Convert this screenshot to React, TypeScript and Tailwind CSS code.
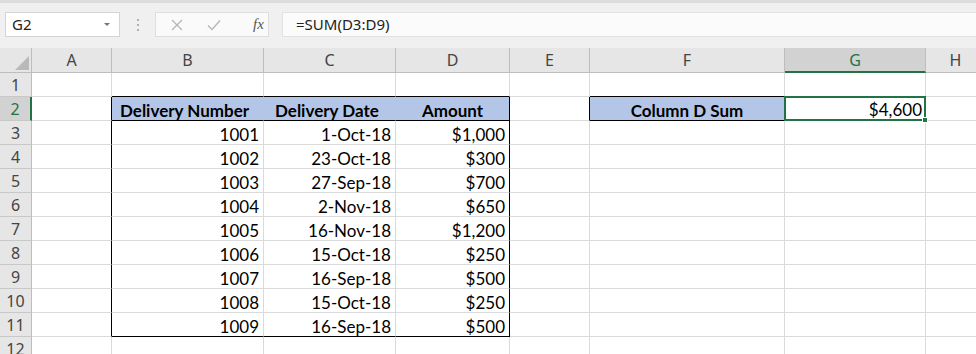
import React from "react";

const cols = ["A", "B", "C", "D", "E", "F", "G", "H"];

const rows = [
  ["1001", "1-Oct-18", "$1,000"],
  ["1002", "23-Oct-18", "$300"],
  ["1003", "27-Sep-18", "$700"],
  ["1004", "2-Nov-18", "$650"],
  ["1005", "16-Nov-18", "$1,200"],
  ["1006", "15-Oct-18", "$250"],
  ["1007", "16-Sep-18", "$500"],
  ["1008", "15-Oct-18", "$250"],
  ["1009", "16-Sep-18", "$500"],
];

const cellFont = { fontFamily: "Lato, 'Open Sans', sans-serif" };

function Cell({
  children,
  className = "",
}: {
  children?: React.ReactNode;
  className?: string;
}) {
  return (
    <div
      className={`h-[24px] border-r border-b border-[#dadada] flex items-end pb-[1px] px-[4px] text-[17px] text-black leading-none overflow-hidden whitespace-nowrap ${className}`}
      style={cellFont}
    >
      {children}
    </div>
  );
}

function RowHeader({ n, selected = false }: { n: number; selected?: boolean }) {
  return (
    <div
      className={`h-[24px] border-b border-[#c8c8c8] flex items-center justify-center text-[16px] ${
        selected
          ? "bg-[#d2d2d2] text-[#217346] border-r-2 border-r-[#217346]"
          : "bg-[#e6e6e6] text-[#444] border-r border-r-[#bdbdbd]"
      }`}
    >
      {n}
    </div>
  );
}

export default function App() {
  return (
    <div
      className="w-[976px] h-[354px] overflow-hidden bg-white"
      style={{ fontFamily: "'Noto Sans', 'Open Sans', sans-serif" }}
    >
      {/* formula bar */}
      <div className="h-[48px] bg-[#f0f0f0] border-t-[3px] border-[#dcdcdc] flex items-start pt-[9px] pl-[5px]">
        <div className="w-[115px] h-[25px] bg-white border border-[#d4d4d4] flex items-center justify-between pl-[6px] pr-[8px]">
          <span className="text-[15px] text-[#222]">G2</span>
          <svg width="8" height="5" viewBox="0 0 8 5">
            <path d="M1 1 L4 4 L7 1 Z" fill="#777" />
          </svg>
        </div>
        <div className="w-[35px] h-[25px] flex flex-col items-center justify-center gap-[3px]">
          <span className="w-[2px] h-[2px] bg-[#b0b0b0]" />
          <span className="w-[2px] h-[2px] bg-[#b0b0b0]" />
          <span className="w-[2px] h-[2px] bg-[#b0b0b0]" />
        </div>
        <div className="w-[114px] h-[25px] bg-[#fafafa] border border-[#dedede] flex items-center pl-[14px] gap-[22px]">
          <svg width="14" height="14" viewBox="0 0 14 14">
            <path d="M2 2 L12 12 M12 2 L2 12" stroke="#b5b5b5" strokeWidth="1.3" />
          </svg>
          <svg width="16" height="14" viewBox="0 0 16 14">
            <path d="M2 7.5 L6 11.5 L14 2.5" stroke="#b5b5b5" strokeWidth="1.3" fill="none" />
          </svg>
          <span
            className="text-[15px] italic text-[#555] ml-[9px]"
            style={{ fontFamily: "'Liberation Serif', serif" }}
          >
            <i>f</i>x
          </span>
        </div>
        <div className="ml-[13px] flex-1 h-[25px] bg-[#fbfbfb] border-y border-l border-[#e2e2e2] flex items-center pl-[13px] text-[15px] text-[#222]">
          =SUM(D3:D9)
        </div>
      </div>

      {/* grid */}
      <div className="grid grid-cols-[32px_80px_152px_132px_114px_80px_195px_141px_60px]">
        {/* column headers */}
        <div className="h-[25px] bg-[#e6e6e6] border-r border-b border-[#bdbdbd] flex items-end justify-end pr-[2px] pb-[2px]">
          <svg width="14" height="14" viewBox="0 0 14 14">
            <path d="M14 0 L14 14 L0 14 Z" fill="#b9b9b9" />
          </svg>
        </div>
        {cols.map((c) =>
          c === "G" ? (
            <div
              key={c}
              className="h-[25px] bg-[#d2d2d2] border-r border-[#bdbdbd] border-b-2 border-b-[#217346] flex items-center justify-center text-[16px] text-[#217346]"
            >
              {c}
            </div>
          ) : (
            <div
              key={c}
              className="h-[25px] bg-[#e6e6e6] border-r border-b border-[#bdbdbd] flex items-center justify-center text-[16px] text-[#444]"
            >
              {c}
            </div>
          )
        )}

        {/* row 1 */}
        <RowHeader n={1} />
        <Cell />
        <Cell className="border-b-black" />
        <Cell className="border-b-black" />
        <Cell className="border-b-black" />
        <Cell />
        <Cell className="border-b-black" />
        <Cell />
        <Cell />

        {/* row 2 */}
        <RowHeader n={2} selected />
        <Cell className="border-r-black" />
        <Cell className="bg-[#b4c6e7] border-r-[#b4c6e7] border-b-black font-bold pl-[8px]">Delivery Number</Cell>
        <Cell className="bg-[#b4c6e7] border-r-[#b4c6e7] border-b-black font-bold pl-[11px]">Delivery Date</Cell>
        <Cell className="bg-[#b4c6e7] border-r-black border-b-black font-bold justify-center">Amount</Cell>
        <Cell className="border-r-black" />
        <Cell className="bg-[#b4c6e7] border-r-[#217346] border-b-black font-bold justify-center">Column D Sum</Cell>
        <div className="relative border-2 border-[#217346] -ml-[1px] -mt-[1px] h-[25px] w-[142px] flex items-end justify-end pr-[2px] pb-[1px] text-[17px] leading-none" style={cellFont}>
          $4,600
          <span className="absolute -right-[4px] -bottom-[4px] w-[6px] h-[6px] bg-[#217346] border border-white" />
        </div>
        <Cell />

        {/* data rows */}
        {rows.map((r, i) => {
          const last = i === rows.length - 1;
          const b = last ? "border-b-black" : "";
          return (
            <React.Fragment key={i}>
              <RowHeader n={i + 3} />
              <Cell className="border-r-black" />
              <Cell className={`justify-end ${b}`}>{r[0]}</Cell>
              <Cell className={`justify-end ${b}`}>{r[1]}</Cell>
              <Cell className={`justify-end border-r-black ${b}`}>{r[2]}</Cell>
              <Cell />
              <Cell />
              <Cell />
              <Cell />
            </React.Fragment>
          );
        })}

        {/* row 12 */}
        <RowHeader n={12} />
        <Cell />
        <Cell />
        <Cell />
        <Cell />
        <Cell />
        <Cell />
        <Cell />
        <Cell />
      </div>
    </div>
  );
}
